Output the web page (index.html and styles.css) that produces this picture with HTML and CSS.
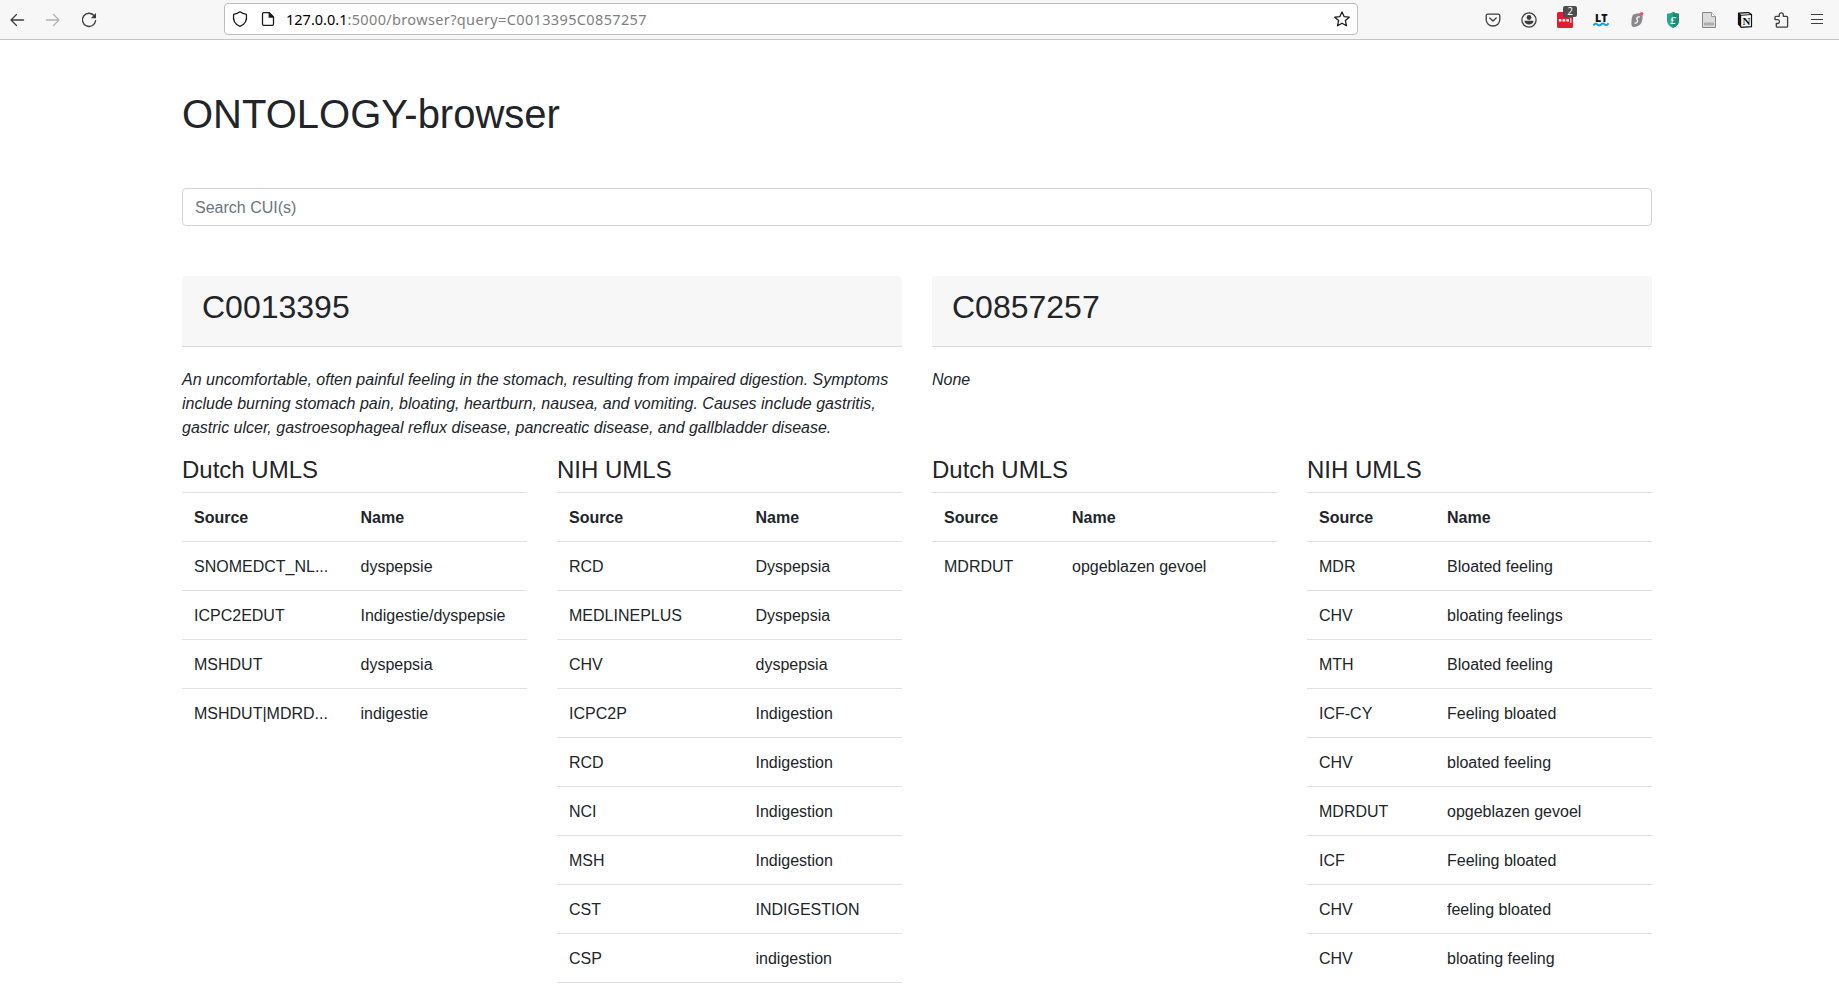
FILE: index.html
```html
<!DOCTYPE html>
<html lang="en">
<head>
<meta charset="utf-8">
<title>ONTOLOGY-browser</title>
<link rel="stylesheet" href="styles.css">
</head>
<body>
<header class="toolbar">
  <nav class="nav-buttons">
    <span class="tool"><svg width="16" height="16" viewBox="0 0 16 16" class="line"><path d="M14.500 8H2M7.500 2.500L2 8l5.500 5.500"/></svg></span>
    <span class="tool disabled"><svg width="16" height="16" viewBox="0 0 16 16" class="line"><path d="M1.500 8H14M8.500 2.500L14 8l-5.500 5.500"/></svg></span>
    <span class="tool"><svg width="16" height="16" viewBox="0 0 16 16" class="line"><path d="M13.400 4A6.600 6.600 0 1 0 14.600 8.600"/><path d="M15 1v5.200H9.800z" fill="currentColor" stroke="none"/></svg></span>
  </nav>
  <div class="urlbar">
    <svg class="dark" width="16" height="16" viewBox="0 0 16 16"><path class="stroke" d="M8 .8C6.200 2.200 3.900 3 1.600 3.300C.9 8.200 2.600 13.300 8 15.300c5.400-2 7.100-7.100 6.400-12C12.100 3 9.800 2.200 8 .8z"/></svg>
    <svg class="dark doc" width="16" height="16" viewBox="0 0 16 16"><path class="stroke" d="M9 1.700H3.800A1.300 1.300 0 0 0 2.500 3v10a1.300 1.300 0 0 0 1.300 1.300h8.400a1.300 1.300 0 0 0 1.300-1.300V6z"/><path d="M8.600 1.300h1L14 5.700v1H8.600z" fill="currentColor"/></svg>
    <span class="url"><b>127.0.0.1</b>:5000/browser?query=C0013395C0857257</span>
    <svg class="dark" width="16" height="16" viewBox="0 0 16 16"><path class="stroke" d="M8 .9l2.100 4.700 5.100.6-3.800 3.400 1.100 5.200L8 12.200l-4.500 2.600 1.100-5.200L.8 6.200l5.100-.6z"/></svg>
  </div>
  <div class="extensions">
    <span class="tool"><svg width="16" height="16" viewBox="0 0 16 16" class="line"><path d="M2.700 2.200h10.600a1.500 1.500 0 0 1 1.500 1.500v4a6.800 6.300 0 0 1-13.600 0v-4a1.500 1.500 0 0 1 1.500-1.500zM4.800 6L8 9l3.200-3"/></svg></span>
    <span class="tool"><svg width="16" height="16" viewBox="0 0 16 16" class="line"><circle cx="8" cy="8" r="7.100"/><circle cx="8" cy="5.500" r="2.400" fill="currentColor" stroke="none"/><path d="M3.500 8.700h9c0 5-9 5-9 0z" fill="currentColor" stroke="none"/></svg></span>
    <span class="tool badge-host"><svg width="16" height="16" viewBox="0 0 16 16"><rect width="16" height="16" rx="1.500" fill="#e31b2e"/><path d="M1.800 7h2.600v2.600H1.800zM5.600 7h2.600v2.600H5.600zM9.400 7H12v2.600H9.400zM13.300 6h1v5h-1z" fill="#fff"/></svg><span class="badge">2</span></span>
    <span class="tool"><svg width="16" height="16" viewBox="0 0 16 16"><text x="2" y="9.500" class="lt" textLength="12.500" lengthAdjust="spacingAndGlyphs">LT</text><path d="M.5 13.300q1.900-2.700 3.750-.9t3.750 0 3.750 0 3.750-1.200" fill="none" stroke="#12a0dc" stroke-width="2"/></svg></span>
    <span class="tool"><svg width="16" height="16" viewBox="0 0 16 16"><path d="M3.500 3.500Q4.500 2 7 1.700l6.500-1q.6 5.500-.8 9.500-1.700 4-8.200 5.100-2.100-.8-2.200-3.300-.1-4.800 1.200-8.500z" fill="#89898b"/><path d="M10.700 5Q8.300 4.500 7.800 6.200q-.1 1.100.6 1.800t-.4 2.400q-.8.9-2.400.6" fill="none" stroke="#fff" stroke-width="1.300"/><circle cx="12.600" cy="1.600" r="1.700" fill="#ff4770"/></svg></span>
    <span class="tool"><svg width="16" height="16" viewBox="0 0 16 16"><path d="M8 0Q5.500 1.800 2 1.800V9q.4 4.500 6 7 5.600-2.500 6-7V1.800Q10.500 1.800 8 0z" fill="#2aa58c"/><path d="M8 0Q10.500 1.800 14 1.800V9q-.4 4.500-6 7z" fill="#1d8b79"/><text x="8" y="11.500" class="pound">£</text></svg></span>
    <span class="tool"><svg width="16" height="16" viewBox="0 0 16 16"><path d="M1.500.5h9l4 4v11h-13z" fill="#dcdcdc" stroke="#858585"/><path d="M10.500.5v4h4" fill="#fff" stroke="#999"/><path d="M3.500 11h9v2h-9z" fill="#bbb" stroke="#999" stroke-width=".7"/></svg></span>
    <span class="tool"><svg width="16" height="16" viewBox="0 0 16 16"><path d="M1.500 1.200l10.200-.6 2.800 2v12l-10.300.8-2.700-3.200z" fill="#fff" stroke="#111" stroke-width="1.200"/><path d="M1.500 1.200L4.200 3.700l10.300-.8v-.5l-2.800-1.800zM1.500 1.200l2.700 2.500v11.600l-2.700-3.100z" fill="#111"/><path d="M2.700 1.700l8.700-.5 1.600 1-8.800.5z" fill="#fff"/><text x="9.400" y="13" class="notion">N</text></svg></span>
    <span class="tool"><svg width="16" height="16" viewBox="0 0 16 16" class="line"><path d="M6.300 4.300V2.800a2 2 0 0 1 4 0v1.500h3.300a1 1 0 0 1 1 1v8.900a1 1 0 0 1-1 1H4.300a1 1 0 0 1-1-1v-2.700h1.200a1.900 1.900 0 0 0 0-3.900H2V5.300a1 1 0 0 1 1-1z"/></svg></span>
    <span class="tool"><svg width="16" height="16" viewBox="0 0 16 16" class="line"><path d="M2.500 2.500h11M2.500 7.500h11M2.500 11.500h11" shape-rendering="crispEdges"/></svg></span>
  </div>
</header>

<main class="container">
  <h1>ONTOLOGY-browser</h1>
  <input class="search" type="text" placeholder="Search CUI(s)">
  <div class="concepts">
    <section>
      <div class="card-header"><h2>C0013395</h2></div>
      <p class="definition">An uncomfortable, often painful feeling in the stomach, resulting from impaired digestion. Symptoms include burning stomach pain, bloating, heartburn, nausea, and vomiting. Causes include gastritis, gastric ulcer, gastroesophageal reflux disease, pancreatic disease, and gallbladder disease.</p>
      <div class="sources">
        <div>
          <h4>Dutch UMLS</h4>
          <table class="cols-nl">
            <tr><th>Source</th><th>Name</th></tr>
            <tr><td>SNOMEDCT_NL...</td><td>dyspepsie</td></tr>
            <tr><td>ICPC2EDUT</td><td>Indigestie/dyspepsie</td></tr>
            <tr><td>MSHDUT</td><td>dyspepsia</td></tr>
            <tr><td>MSHDUT|MDRD...</td><td>indigestie</td></tr>
          </table>
        </div>
        <div>
          <h4>NIH UMLS</h4>
          <table class="cols-nih continued">
            <tr><th>Source</th><th>Name</th></tr>
            <tr><td>RCD</td><td>Dyspepsia</td></tr>
            <tr><td>MEDLINEPLUS</td><td>Dyspepsia</td></tr>
            <tr><td>CHV</td><td>dyspepsia</td></tr>
            <tr><td>ICPC2P</td><td>Indigestion</td></tr>
            <tr><td>RCD</td><td>Indigestion</td></tr>
            <tr><td>NCI</td><td>Indigestion</td></tr>
            <tr><td>MSH</td><td>Indigestion</td></tr>
            <tr><td>CST</td><td>INDIGESTION</td></tr>
            <tr><td>CSP</td><td>indigestion</td></tr>
          </table>
        </div>
      </div>
    </section>
    <section>
      <div class="card-header"><h2>C0857257</h2></div>
      <p class="definition">None</p>
      <div class="sources">
        <div>
          <h4>Dutch UMLS</h4>
          <table class="cols-short">
            <tr><th>Source</th><th>Name</th></tr>
            <tr><td>MDRDUT</td><td>opgeblazen gevoel</td></tr>
          </table>
        </div>
        <div>
          <h4>NIH UMLS</h4>
          <table class="cols-short">
            <tr><th>Source</th><th>Name</th></tr>
            <tr><td>MDR</td><td>Bloated feeling</td></tr>
            <tr><td>CHV</td><td>bloating feelings</td></tr>
            <tr><td>MTH</td><td>Bloated feeling</td></tr>
            <tr><td>ICF-CY</td><td>Feeling bloated</td></tr>
            <tr><td>CHV</td><td>bloated feeling</td></tr>
            <tr><td>MDRDUT</td><td>opgeblazen gevoel</td></tr>
            <tr><td>ICF</td><td>Feeling bloated</td></tr>
            <tr><td>CHV</td><td>feeling bloated</td></tr>
            <tr><td>CHV</td><td>bloating feeling</td></tr>
          </table>
        </div>
      </div>
    </section>
  </div>
</main>
</body>
</html>
```

FILE: styles.css
```css
* { box-sizing: border-box; }

body {
  margin: 0;
  height: 991px;
  overflow: hidden;
  background: #fff;
  color: #212529;
  font: 16px/24px "Liberation Sans", Arial, sans-serif;
}

/* Browser toolbar */
.toolbar {
  display: flex;
  align-items: flex-start;
  height: 40px;
  padding: 3px 4px 0 0;
  background: #f7f7f7;
  border-bottom: 1px solid #c4c4c4;
}
.nav-buttons, .extensions { display: flex; height: 33px; }
.nav-buttons { margin-left: -1px; }
.tool {
  display: flex;
  align-items: center;
  justify-content: center;
  width: 36px;
  color: #3d3d3d;
}
.tool svg, .urlbar svg { display: block; flex: none; overflow: visible; }
.disabled { color: #b4b4b4; }
.line, .stroke {
  fill: none;
  stroke: currentColor;
  stroke-width: 1.3;
  stroke-linecap: round;
  stroke-linejoin: round;
}
.badge-host { position: relative; }
.badge {
  position: absolute;
  left: 16px;
  top: 3px;
  width: 14px;
  height: 11px;
  background: #4d4d4d;
  border-radius: 2px;
  color: #fff;
  font: 10px/11px "Noto Sans", sans-serif;
  text-align: center;
}
.lt { font: 800 11px "Open Sans", sans-serif; fill: #111; }
.pound { font: italic bold 11px "Liberation Serif", serif; fill: #fff; text-anchor: middle; }
.notion { font: bold 11px "Liberation Serif", serif; fill: #111; text-anchor: middle; }

.urlbar {
  display: flex;
  align-items: center;
  width: 1134px;
  height: 32px;
  margin: 0 117px 0 117px;
  padding: 0 7px;
  background: #fff;
  border: 1px solid #bdbdbd;
  border-radius: 4px;
}
.dark { color: #1c1c1c; }
.doc { margin-left: 12px; }
.url {
  flex: 1;
  margin-left: 10px;
  color: #808080;
  font: 14.500px/20px "Noto Sans", sans-serif;
  letter-spacing: .36px;
  white-space: nowrap;
}
.url b { color: #000; font-weight: 400; letter-spacing: 0; }

/* Page */
.container { width: 1470px; margin-left: 182px; padding-top: 50px; }
h1, h2, h4 { margin: 0 0 8px; font-weight: 400; line-height: 1.2; }
h1 { margin-bottom: 50px; font-size: 40px; }
h2 { font-size: 32px; }
h4 { margin-bottom: 7px; font-size: 24px; }
.search {
  display: block;
  width: 100%;
  height: 38px;
  padding: 7px 12px 5px;
  background: #fff;
  border: 1px solid #ced4da;
  border-radius: 4px;
  color: #495057;
  font: inherit;
}
.search::placeholder { color: #6c757d; opacity: 1; }
.concepts {
  display: grid;
  grid-template-columns: 1fr 1fr;
  gap: 30px;
  margin-top: 50px;
}
.card-header {
  padding: 12px 20px;
  background: #f7f7f7;
  border-bottom: 1px solid #d8d8d8;
  border-radius: 4px 4px 0 0;
}
.definition { height: 72px; margin: 21px 0 16px; font-style: italic; }
.sources {
  display: grid;
  grid-template-columns: 1fr 1fr;
  gap: 30px;
  align-items: start;
}
table {
  width: 100%;
  table-layout: fixed;
  border-spacing: 0;
}
th, td {
  height: 49px;
  padding: 13px 12px 11px;
  border-top: 1px solid #dee2e6;
  text-align: left;
  white-space: nowrap;
}
.cols-nl th:first-child { width: 166.500px; }
.cols-nih th:first-child { width: 186.500px; }
.cols-short th:first-child { width: 128px; }
.continued { border-bottom: 1px solid #dee2e6; }
```
